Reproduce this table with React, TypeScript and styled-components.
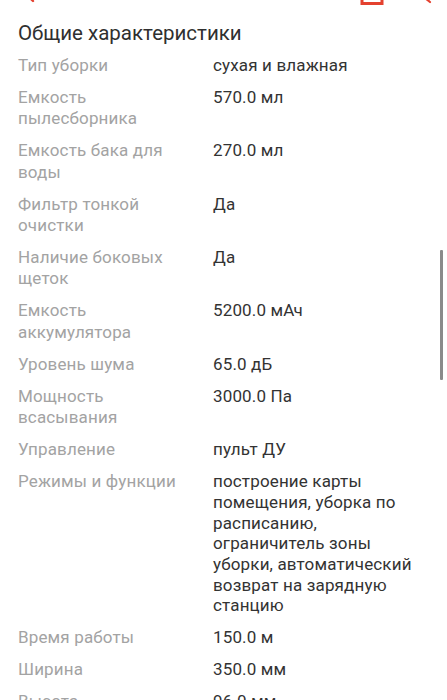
import React from "react";
import styled, { createGlobalStyle } from "styled-components";

const Global = createGlobalStyle`
  html, body { margin: 0; padding: 0; background: #fff; overflow: hidden; }
  body { font-family: Roboto, "Noto Sans", "Liberation Sans", sans-serif; -webkit-font-smoothing: antialiased; }
`;

const Page = styled.div`
  width: 447px;
  height: 700px;
  overflow: hidden;
  position: relative;
  background: #fff;
`;

const Header = styled.header`
  height: 56px;
  margin-top: -51px;
  display: flex;
  align-items: flex-end;
  justify-content: space-between;
  padding: 0 12px 0 20px;
  color: #e4412f;
`;

const HeaderActions = styled.div`
  display: flex;
  align-items: flex-end;
  gap: 27px;
`;

const IconBox = styled.svg`
  display: block;
  width: 24px;
  height: 24px;
`;

const Section = styled.section`
  padding: 0 18px;
`;

const Title = styled.h2`
  margin: 15px 0 9px;
  font-size: 20.5px;
  line-height: 26px;
  font-weight: 400;
  color: #2f2f2f;
`;

const Specs = styled.dl`
  margin: 0;
  display: grid;
  grid-template-columns: 175px 1fr;
  column-gap: 20px;
  row-gap: 10.7px;
`;

const Label = styled.dt`
  margin: 0;
  font-size: 17px;
  letter-spacing: 0.15px;
  line-height: 21.33px;
  color: #a3a3a3;
`;

const Value = styled.dd`
  margin: 0;
  font-size: 17px;
  letter-spacing: 0.15px;
  line-height: 20.7px;
  color: #333333;
`;

const Scrollbar = styled.div`
  position: absolute;
  right: 4px;
  top: 250px;
  width: 3px;
  height: 130px;
  background: #8a8a8a;
  border-radius: 1px;
`;

const specs: [string, string][] = [
  ["Тип уборки", "сухая и влажная"],
  ["Емкость пылесборника", "570.0 мл"],
  ["Емкость бака для воды", "270.0 мл"],
  ["Фильтр тонкой очистки", "Да"],
  ["Наличие боковых щеток", "Да"],
  ["Емкость аккумулятора", "5200.0 мАч"],
  ["Уровень шума", "65.0 дБ"],
  ["Мощность всасывания", "3000.0 Па"],
  ["Управление", "пульт ДУ"],
  [
    "Режимы и функции",
    "построение карты помещения, уборка по расписанию, ограничитель зоны уборки, автоматический возврат на зарядную станцию",
  ],
  ["Время работы", "150.0 м"],
  ["Ширина", "350.0 мм"],
  ["Высота", "96.0 мм"],
];

export default function App() {
  return (
    <>
      <Global />
      <Page>
        <Header>
          <IconBox viewBox="0 0 24 24" fill="none" stroke="currentColor" strokeWidth="2.4" strokeLinecap="round">
            <path d="M13 4 L5 12 L13 20" />
          </IconBox>
          <HeaderActions>
            <IconBox viewBox="0 0 24 24" fill="none" stroke="currentColor" strokeWidth="3">
              <path d="M2 4 L2 22.5 L22 22.5 L22 4" />
            </IconBox>
            <IconBox viewBox="0 0 24 24" fill="none" stroke="currentColor" strokeWidth="2.2" strokeLinecap="round">
              <path d="M4 4 L11 11 M14 17 L19 21" />
            </IconBox>
          </HeaderActions>
        </Header>
        <Section>
          <Title>Общие характеристики</Title>
          <Specs>
            {specs.map(([k, v]) => (
              <React.Fragment key={k}>
                <Label>{k}</Label>
                <Value>{v}</Value>
              </React.Fragment>
            ))}
          </Specs>
        </Section>
        <Scrollbar />
      </Page>
    </>
  );
}
